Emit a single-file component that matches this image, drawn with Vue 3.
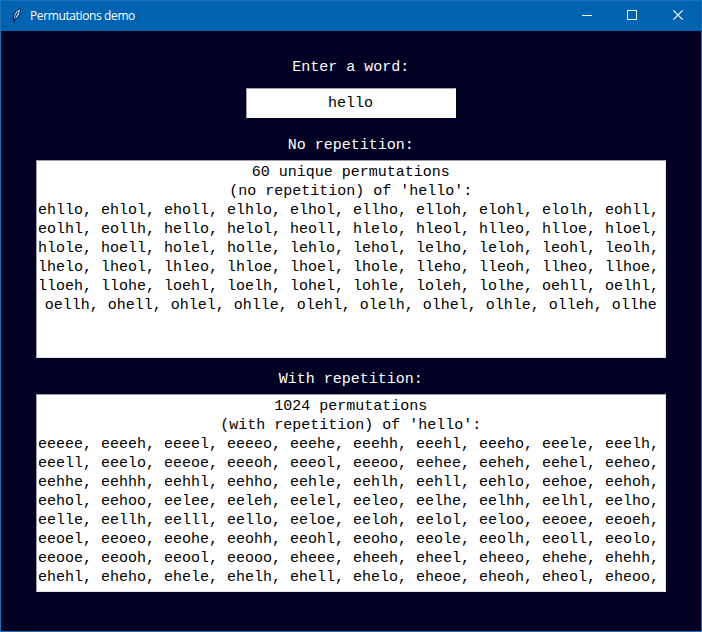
<script setup>
import { ref, computed } from 'vue'

const word = ref('hello')
const PER_ROW = 10
const VISIBLE_ROWS = 8

const letters = computed(() => [...word.value].sort())
const alphabet = computed(() => [...new Set(letters.value)])

function permute(pool) {
  if (pool.length === 0) return ['']
  const out = []
  for (const ch of new Set(pool)) {
    const rest = [...pool]
    rest.splice(rest.indexOf(ch), 1)
    for (const tail of permute(rest)) out.push(ch + tail)
  }
  return out
}

function product(chars, length) {
  if (length === 0) return ['']
  const tails = product(chars, length - 1)
  return chars.flatMap((ch) => tails.map((tail) => ch + tail))
}

function toRows(words) {
  const rows = []
  for (let i = 0; i < words.length; i += PER_ROW) {
    const last = i + PER_ROW >= words.length
    rows.push({ text: words.slice(i, i + PER_ROW).join(', ') + (last ? '' : ','), last })
  }
  return rows.slice(0, VISIBLE_ROWS)
}

const unique = computed(() => permute(letters.value))
const repeated = computed(() => product(alphabet.value, word.value.length))

const panels = computed(() => [
  {
    label: 'No repetition:',
    title: `${unique.value.length} unique permutations`,
    subtitle: `(no repetition) of '${word.value}':`,
    rows: toRows(unique.value),
  },
  {
    label: 'With repetition:',
    title: `${repeated.value.length} permutations`,
    subtitle: `(with repetition) of '${word.value}':`,
    rows: toRows(repeated.value),
  },
])
</script>

<template>
  <div class="window">
    <header class="titlebar">
      <svg class="feather" width="16" height="16" viewBox="0 0 16 16">
        <path d="M4.8 12 C3.4 8 6 2.4 11 0.6 C12.4 3.6 10.4 9 6 11.8 Z" fill="#8fbdf0" stroke="#07101f" stroke-width="1" />
        <path d="M9.2 4 C7.4 6.2 5.4 9.6 4.9 15" fill="none" stroke="#07101f" stroke-width="0.9" />
      </svg>
      <span class="caption">Permutations demo</span>
      <div class="controls">
        <svg width="46" height="30" viewBox="0 0 46 30"><path d="M19 14.5H29" /></svg>
        <svg width="46" height="30" viewBox="0 0 46 30"><path d="M18.5 9.5H27.5V18.5H18.5Z" /></svg>
        <svg width="46" height="30" viewBox="0 0 46 30"><path class="cross" d="M18.4 9.4L27.6 18.6M27.6 9.4L18.4 18.6" /></svg>
      </div>
    </header>
    <main class="content">
      <label class="label" for="word">Enter a word:</label>
      <input id="word" v-model="word" class="entry" type="text" spellcheck="false" />
      <section v-for="panel in panels" :key="panel.label" class="panel">
        <h2 class="label">{{ panel.label }}</h2>
        <div class="output">
          <div class="line centered">{{ panel.title }}</div>
          <div class="line centered">{{ panel.subtitle }}</div>
          <div v-for="row in panel.rows" :key="row.text" class="line" :class="{ centered: row.last }">{{ row.text }}</div>
        </div>
      </section>
    </main>
  </div>
</template>

<style>
body {
  margin: 0;
  background: #000022;
}
</style>

<style scoped>
.window {
  box-sizing: border-box;
  width: 702px;
  height: 632px;
  border: 1px solid #1a6fb5;
  background: #000022;
  overflow: hidden;
}
.titlebar {
  display: flex;
  align-items: center;
  height: 30px;
  padding-left: 8px;
  background: #0063b1;
}
.feather {
  margin-right: 5px;
}
.caption {
  flex: 1;
  color: #fff;
  font: 12px/30px "Open Sans", "Noto Sans", sans-serif;
  letter-spacing: -0.38px;
  white-space: nowrap;
}
.controls {
  display: flex;
}
.controls svg {
  display: block;
  fill: none;
  stroke: #fff;
  stroke-width: 1;
}
.controls .cross {
  stroke-width: 1.2;
}
.content {
  display: flex;
  flex-direction: column;
  align-items: center;
  padding-top: 27px;
  font: 15px/19px "Liberation Mono", monospace;
}
.label {
  display: block;
  margin: 0;
  padding-right: 0.5px;
  height: 19px;
  color: #fff;
  font: inherit;
  text-align: center;
}
.entry {
  box-sizing: border-box;
  width: 210px;
  height: 30px;
  margin: 11px 0 0;
  padding: 0 1px 0 0;
  border: 1px solid;
  border-color: #a0a0a0 #fff #fff #a0a0a0;
  border-radius: 0;
  outline: none;
  background: #fff;
  color: #000;
  font: inherit;
  text-align: center;
}
.panel {
  padding-top: 18px;
}
.panel + .panel {
  padding-top: 12px;
}
.output {
  box-sizing: border-box;
  width: 630px;
  height: 198px;
  margin-top: 5px;
  padding-top: 2px;
  border: 1px solid;
  border-color: #a0a0a0 #e3e3e3 #e3e3e3 #a0a0a0;
  background: #fff;
  color: #000;
  overflow: hidden;
}
.line {
  height: 19px;
  padding-left: 1px;
  white-space: pre;
}
.centered {
  padding: 0 0.5px 0 0;
  text-align: center;
}
</style>
